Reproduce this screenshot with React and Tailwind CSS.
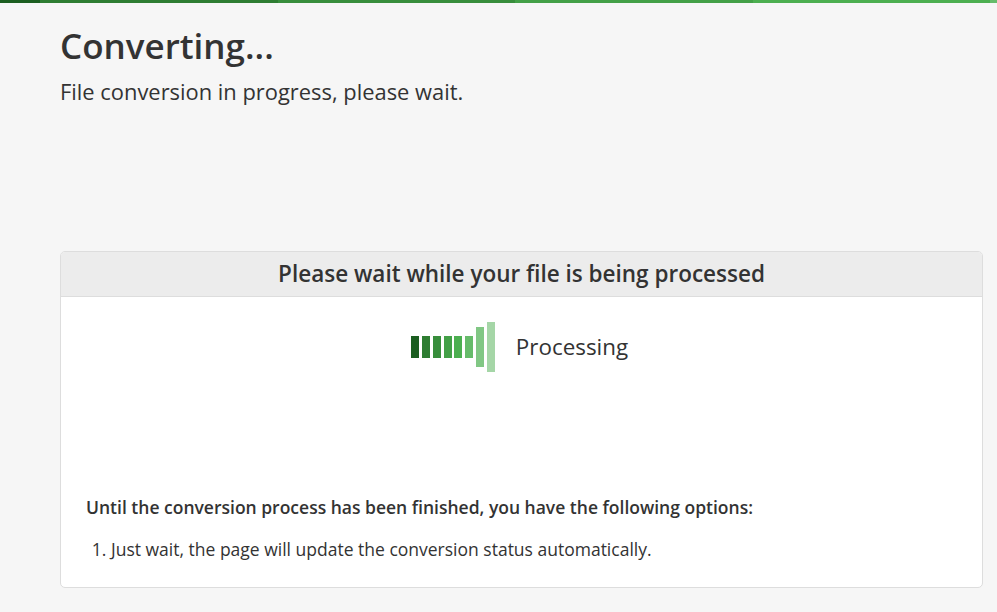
export default function App() {
  const bars = [
    ["h-[22px] bg-[#1b5e20]", "ml-0"],
    ["h-[22px] bg-[#2e7d32]", "ml-[3px]"],
    ["h-[22px] bg-[#388e3c]", "ml-[3px]"],
    ["h-[22px] bg-[#43a047]", "ml-[3px]"],
    ["h-[22px] bg-[#4caf50]", "ml-[2px]"],
    ["h-[22px] bg-[#66bb6a]", "ml-[3px]"],
    ["h-[40px] bg-[#81c784]", "ml-[3px]"],
    ["h-[50px] bg-[#a5d6a7]", "ml-[3px]"],
  ];
  return (
    <div className="min-h-[612px] bg-[#f6f6f6] font-['Open_Sans',sans-serif] text-[#333]">
      <div className="flex h-[3px] w-full">
        <div className="w-[40px] bg-[#1b5e20]" />
        <div className="w-[238px] bg-[#2e7d32]" />
        <div className="w-[237px] bg-[#388e3c]" />
        <div className="w-[238px] bg-[#43a047]" />
        <div className="w-[237px] bg-[#4caf50]" />
        <div className="flex-1 bg-[#66bb6a]" />
      </div>
      <div className="ml-[60px] mr-[14px]">
        <h1 className="m-0 mt-[20px] text-[35px] leading-[46px] font-semibold text-[#333]">Converting...</h1>
        <p className="m-0 mt-[8px] text-[21.9px] leading-[30px] text-[#333]">File conversion in progress, please wait.</p>
        <div className="mt-[144px] h-[337px] overflow-hidden rounded-[5px] border border-[#ddd] bg-white">
          <div className="flex h-[45px] items-center justify-center border-b border-[#ddd] bg-[#ececec] pb-[1px] text-[22.5px] font-semibold">
            Please wait while your file is being processed
          </div>
          <div className="mt-[25px] mr-[4px] flex h-[50px] items-center justify-center">
            <div className="flex items-center">
              {bars.map(([c, m], i) => (
                <div key={i} className={`w-[8px] ${c} ${m}`} />
              ))}
            </div>
            <span className="ml-[21px] pb-[1px] text-[22.4px] leading-[30px]">Processing</span>
          </div>
          <p className="m-0 ml-[25px] mt-[123px] text-[17.5px] leading-[24px] font-semibold">
            Until the conversion process has been finished, you have the following options:
          </p>
          <ol className="m-0 ml-[25px] mt-[18px] list-decimal pl-[25px] text-[17.5px] leading-[24px]">
            <li>Just wait, the page will update the conversion status automatically.</li>
          </ol>
        </div>
      </div>
    </div>
  );
}
